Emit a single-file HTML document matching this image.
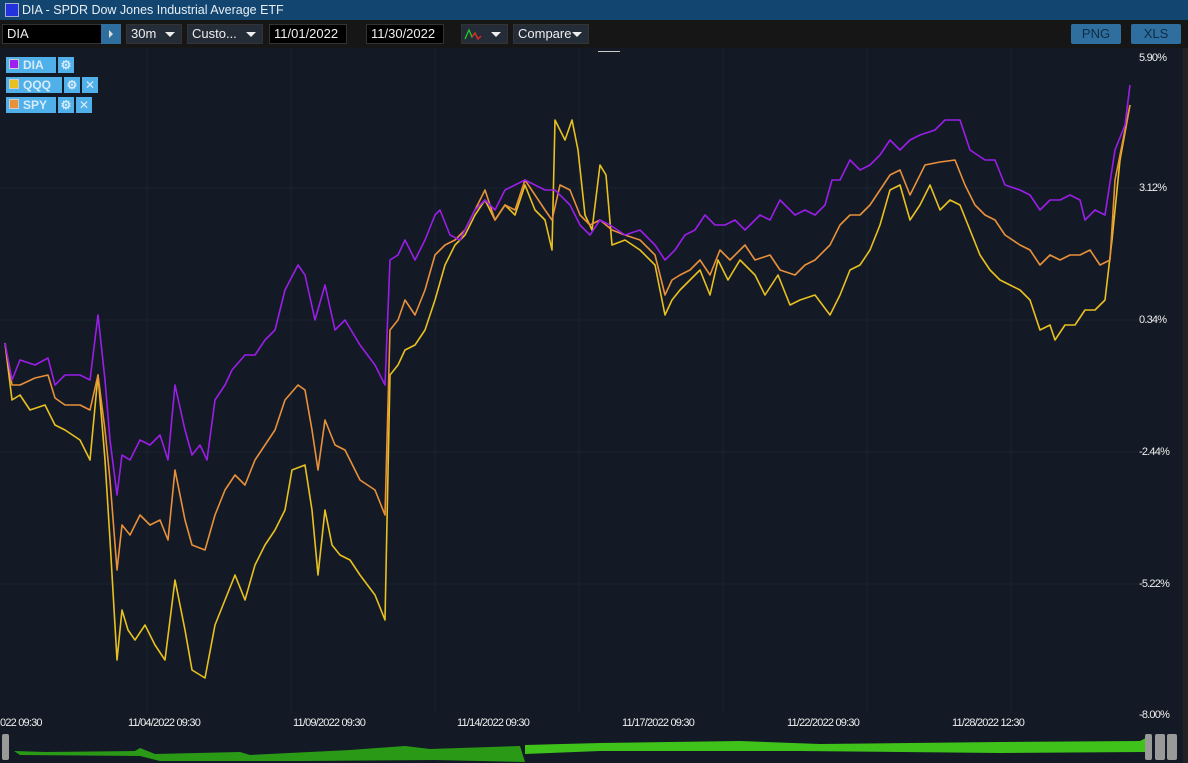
<!DOCTYPE html><html><head><style>
body{margin:0;width:1188px;height:763px;background:#131a25;font-family:"Liberation Sans",sans-serif;overflow:hidden;position:relative}
.t{position:absolute;left:0;top:0;width:1188px;height:20px;background:#124670;color:#e8eef4;font-size:12.5px}
.tb{position:absolute;top:20px;left:0;width:1188px;height:28px;background:#161616}
.f{position:absolute;top:24px;height:20px;border:1px solid #333;box-sizing:border-box;color:#eee;font-size:13px;line-height:18px;padding-left:4px}
.dk{background:#000}.gr{background:#242c38}
.ar{position:absolute;right:6px;top:7px;border-left:5px solid transparent;border-right:5px solid transparent;border-top:5px solid #eee}
.btn{position:absolute;top:24px;height:20px;background:#2e6fa0;color:#0e2c44;font-size:13px;text-align:center;line-height:20px;border-radius:2px}
.lg{position:absolute;height:16px;background:#4fb0ea;color:#d6ecfa;font-weight:bold;font-size:12px;line-height:16px}
.sq{display:inline-block;width:8px;height:8px;margin:0 4px 0 3px;border:1px solid #ccc}
.ax{position:absolute;color:#eee;font-size:11px;letter-spacing:-.8px}
</style></head><body>
<div class="t"><span style="position:absolute;left:5px;top:3px;width:12px;height:12px;background:#2233dd;border:1px solid #aac"></span><span style="position:absolute;left:22px;top:3px">DIA - SPDR Dow Jones Industrial Average ETF</span></div>
<div class="tb"></div>
<div class="f dk" style="left:2px;width:100px">DIA</div>
<div style="position:absolute;left:101px;top:24px;width:20px;height:20px;background:#2e6fa0"><span style="position:absolute;left:8px;top:6px;border-top:4px solid transparent;border-bottom:4px solid transparent;border-left:4px solid #ddd"></span></div>
<div class="f gr" style="left:126px;width:56px">30m<span class="ar"></span></div>
<div class="f gr" style="left:187px;width:76px">Custo...<span class="ar"></span></div>
<div class="f dk" style="left:269px;width:78px">11/01/2022</div>
<div class="f dk" style="left:366px;width:78px">11/30/2022</div>
<div class="f gr" style="left:461px;width:47px"><svg width="22" height="14" style="position:absolute;left:2px;top:2px"><polyline points="1,12 5,3 8,10 11,6 14,12" fill="none" stroke="#2c2" stroke-width="1.3"/><polyline points="8,10 11,6 14,12 17,9" fill="none" stroke="#e22" stroke-width="1.3"/></svg><span class="ar"></span></div>
<div class="f gr" style="left:513px;width:76px">Compare<span class="ar"></span></div>
<div class="btn" style="left:1071px;width:50px">PNG</div>
<div class="btn" style="left:1131px;width:50px">XLS</div>
<div style="position:absolute;left:1183px;top:48px;width:5px;height:715px;background:#222"></div>
<svg style="position:absolute;left:0;top:48px" width="1183" height="715">
<g stroke="#1a2330" stroke-width="1"><line x1="147" y1="0" x2="147" y2="665"/><line x1="291" y1="0" x2="291" y2="665"/><line x1="435" y1="0" x2="435" y2="665"/><line x1="579" y1="0" x2="579" y2="665"/><line x1="723" y1="0" x2="723" y2="665"/><line x1="867" y1="0" x2="867" y2="665"/><line x1="1011" y1="0" x2="1011" y2="665"/>
<line x1="0" y1="140" x2="1138" y2="140"/><line x1="0" y1="272" x2="1138" y2="272"/><line x1="0" y1="404" x2="1138" y2="404"/><line x1="0" y1="536" x2="1138" y2="536"/></g>
<rect x="598" y="3" width="22" height="1" fill="#ccc"/>
<g transform="translate(0,-48)" fill="none" stroke-width="1.6" stroke-linejoin="round">
<polyline stroke="#e8c020" points="5,343 12,400 20,395 30,410 45,405 55,425 65,430 80,440 90,460 98,375 105,460 110,540 117,660 122,610 128,630 135,640 145,625 155,645 165,660 175,580 185,630 192,670 205,678 215,625 225,600 235,575 245,600 255,565 265,545 275,530 285,510 292,470 305,465 312,510 318,575 325,510 332,545 340,555 350,560 360,575 375,595 385,620 390,375 398,365 405,350 415,345 425,330 435,300 445,265 455,245 465,235 475,215 485,200 495,220 505,205 515,215 525,185 535,210 545,220 552,250 555,120 565,140 572,120 578,150 585,215 592,230 600,165 606,175 612,245 625,240 640,250 655,265 665,315 672,300 680,290 690,280 700,270 710,295 718,260 728,280 740,260 755,275 765,295 778,275 790,305 800,300 815,295 830,315 840,295 850,270 860,265 870,250 880,225 890,190 900,185 910,220 920,205 930,185 940,210 950,200 960,205 970,230 980,255 990,270 1000,280 1010,285 1020,290 1030,300 1040,330 1050,325 1055,340 1065,325 1075,325 1085,310 1095,310 1105,300 1112,240 1120,160 1130,105"/>
<polyline stroke="#e8903a" points="5,343 12,385 20,385 35,378 48,375 55,398 65,405 80,405 90,410 98,375 105,430 110,480 117,570 122,525 130,535 140,515 150,525 160,520 168,540 175,470 185,520 192,545 205,550 215,515 225,490 235,475 245,485 255,460 265,445 275,430 285,400 298,385 305,390 312,430 318,470 325,420 335,445 345,450 360,480 375,490 385,515 390,330 398,320 405,300 415,315 425,290 435,255 445,245 455,240 465,230 475,210 485,190 495,220 505,205 515,210 525,180 535,195 545,210 552,220 560,185 570,190 580,215 590,225 600,220 612,230 625,235 640,240 655,255 665,295 672,280 680,275 690,270 700,260 710,275 720,250 730,260 745,245 755,260 770,255 780,270 795,275 805,265 815,260 830,245 840,225 850,215 860,215 870,205 880,190 890,175 900,170 910,195 925,165 940,162 955,160 965,185 975,205 985,215 995,220 1005,235 1020,245 1030,250 1040,265 1050,255 1060,260 1070,255 1080,255 1090,250 1100,265 1110,260 1115,180 1125,130 1130,105"/>
<polyline stroke="#9a1ee8" points="5,343 12,380 20,360 35,365 48,358 55,385 65,375 80,375 90,380 98,315 105,380 110,440 117,495 122,455 130,460 140,440 150,445 160,435 168,460 175,385 185,430 192,455 200,445 207,460 215,400 225,385 232,370 245,355 255,355 265,340 275,330 285,290 298,265 305,275 315,320 325,285 335,330 345,320 360,345 375,365 385,385 390,260 398,255 405,240 415,260 425,240 435,215 440,210 450,235 460,240 475,210 485,200 495,210 505,190 515,185 525,180 535,185 545,190 555,190 570,205 580,225 590,235 600,220 610,225 625,235 640,230 655,245 665,260 675,250 685,235 695,230 705,215 715,225 725,225 735,220 745,230 760,215 770,220 780,200 795,215 805,210 815,215 825,205 832,180 840,180 850,160 860,170 870,165 880,155 890,140 900,150 910,140 920,135 935,130 945,120 960,120 970,150 985,160 995,160 1005,185 1020,190 1030,195 1040,210 1050,200 1060,200 1070,195 1080,200 1085,220 1095,210 1105,215 1115,150 1125,125 1130,85"/>
</g>
<rect x="0" y="685" width="1183" height="30" fill="#131a25"/>
<polygon points="14,703 45,704 135,703 140,700 155,706 240,704 250,707 350,702 405,698 430,701 520,698 525,714 435,712 300,713 160,713 140,708 20,707" fill="#2a9a16"/>
<polygon points="525,697 600,695 740,693 820,696 1000,694 1140,693 1148,689 1148,704 1000,705 800,703 600,703 525,706" fill="#3fc21a"/>
<rect x="2" y="686" width="7" height="26" rx="2" fill="#999"/><rect x="1145" y="686" width="7" height="26" rx="2" fill="#999"/>
<rect x="1155" y="686" width="10" height="26" rx="2" fill="#999"/><rect x="1167" y="686" width="10" height="26" rx="2" fill="#999"/>
</svg>
<div class="ax" style="left:1139px;top:52px">5.90%</div>
<div class="ax" style="left:1139px;top:182px">3.12%</div>
<div class="ax" style="left:1139px;top:314px">0.34%</div>
<div class="ax" style="left:1139px;top:446px">-2.44%</div>
<div class="ax" style="left:1139px;top:578px">-5.22%</div>
<div class="ax" style="left:1139px;top:709px">-8.00%</div>
<div class="ax" style="left:0;top:717px">022 09:30</div>
<div class="ax" style="left:128px;top:717px">11/04/2022 09:30</div>
<div class="ax" style="left:293px;top:717px">11/09/2022 09:30</div>
<div class="ax" style="left:457px;top:717px">11/14/2022 09:30</div>
<div class="ax" style="left:622px;top:717px">11/17/2022 09:30</div>
<div class="ax" style="left:787px;top:717px">11/22/2022 09:30</div>
<div class="ax" style="left:952px;top:717px">11/28/2022 12:30</div>
<div class="lg" style="left:6px;top:57px;width:50px"><span class="sq" style="background:#a020f0"></span>DIA</div>
<div class="lg" style="left:58px;top:57px;width:16px;text-align:center">⚙</div>
<div class="lg" style="left:6px;top:77px;width:56px"><span class="sq" style="background:#e8c020"></span>QQQ</div>
<div class="lg" style="left:64px;top:77px;width:16px;text-align:center">⚙</div>
<div class="lg" style="left:82px;top:77px;width:16px;text-align:center;font-weight:normal">✕</div>
<div class="lg" style="left:6px;top:97px;width:50px"><span class="sq" style="background:#e8903a"></span>SPY</div>
<div class="lg" style="left:58px;top:97px;width:16px;text-align:center">⚙</div>
<div class="lg" style="left:76px;top:97px;width:16px;text-align:center;font-weight:normal">✕</div>
</body></html>
